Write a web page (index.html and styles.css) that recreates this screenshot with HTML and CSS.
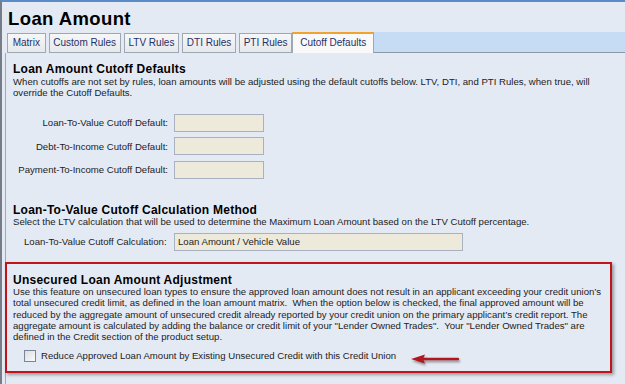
FILE: index.html
```html
<!DOCTYPE html>
<html>
<head>
<meta charset="utf-8">
<link rel="stylesheet" href="styles.css">
</head>
<body>
<div class="window">
  <h1 class="title">Loan Amount</h1>
  <div class="tabs">
    <div class="tab first">Matrix</div>
    <div class="tab">Custom Rules</div>
    <div class="tab">LTV Rules</div>
    <div class="tab">DTI Rules</div>
    <div class="tab">PTI Rules</div>
    <div class="tab active">Cutoff Defaults</div>
    <div class="tab-fill"></div>
  </div>
  <div class="panel">
    <section class="group g1">
      <h2>Loan Amount Cutoff Defaults</h2>
      <p class="desc">When cutoffs are not set by rules, loan amounts will be adjusted using the default cutoffs below. LTV, DTI, and PTI Rules, when true, will<br>override the Cutoff Defaults.</p>
      <div class="fields">
        <label>Loan-To-Value Cutoff Default:</label><div class="box"></div>
        <label>Debt-To-Income Cutoff Default:</label><div class="box"></div>
        <label>Payment-To-Income Cutoff Default:</label><div class="box"></div>
      </div>
    </section>
    <section class="group g2">
      <h2>Loan-To-Value Cutoff Calculation Method</h2>
      <p class="desc">Select the LTV calculation that will be used to determine the Maximum Loan Amount based on the LTV Cutoff percentage.</p>
      <div class="calc-row">
        <label>Loan-To-Value Cutoff Calculation:</label>
        <div class="box wide">Loan Amount / Vehicle Value</div>
      </div>
    </section>
    <section class="group highlight">
      <h2>Unsecured Loan Amount Adjustment</h2>
      <p class="desc">Use this feature on unsecured loan types to ensure the approved loan amount does not result in an applicant exceeding your credit union’s<br>total unsecured credit limit, as defined in the loan amount matrix.&nbsp; When the option below is checked, the final approved amount will be<br>reduced by the aggregate amount of unsecured credit already reported by your credit union on the primary applicant’s credit report. The<br>aggregate amount is calculated by adding the balance or credit limit of your "Lender Owned Trades".&nbsp; Your "Lender Owned Trades" are<br>defined in the Credit section of the product setup.</p>
      <div class="check-row">
        <span class="checkbox"></span>
        <span class="check-label">Reduce Approved Loan Amount by Existing Unsecured Credit with this Credit Union</span>
      </div>
      <svg class="arrow" width="52" height="16" viewBox="0 0 52 16">
        <line x1="12" y1="7" x2="48" y2="7" stroke="#b3161c" stroke-width="2.4" stroke-linecap="round"/>
        <polygon points="1,7 15,2.5 13,7 15,11.5" fill="#b3161c"/>
      </svg>
    </section>
  </div>
</div>
</body>
</html>
```
FILE: styles.css
```css
* { box-sizing: border-box; }
html, body { margin: 0; padding: 0; }
body {
  width: 625px;
  height: 384px;
  overflow: hidden;
  background: #e4eaf4;
  font-family: "Liberation Sans", Arial, sans-serif;
  color: #1c1c1c;
}
.window {
  height: 384px;
  border-top: 2px solid #5b8cc6;
  border-left: 2px solid #767d88;
  display: flex;
  flex-direction: column;
}
.title {
  margin: 0;
  padding: 6px 0 0 6px;
  font-size: 18.5px;
  letter-spacing: 0.4px;
  line-height: 22px;
  font-weight: bold;
  color: #000;
}
.tabs {
  display: flex;
  align-items: flex-end;
  height: 21px;
  margin-top: 2px;
  padding-left: 5px;
}
.tab {
  height: 20px;
  padding: 0 3.7px;
  margin-right: 3px;
  border: 1px solid #9ea7b4;
  background: linear-gradient(#f7f7f7, #e6e8ec);
  font-size: 10px;
  line-height: 18px;
  color: #1f306a;
  white-space: nowrap;
}
.tab.first { padding: 0 4.7px; }
.tab.active {
  height: 21px;
  margin-left: -3px;
  margin-right: 0;
  padding: 0 7px;
  border-top: 2px solid #f0a32e;
  border-bottom: none;
  background: #f9f9f9;
}
.tab-fill {
  flex: 1;
  height: 21px;
  background: #c6dcf5;
  border-bottom: 1px solid #8e97a4;
}
.panel {
  flex: 1;
  margin-left: 3px;
  border-left: 1px solid #a0a9b6;
  padding: 10px 0 0 7px;
}
.group h2 {
  margin: 0;
  font-size: 12px;
  letter-spacing: 0.25px;
  line-height: 12px;
  font-weight: bold;
  color: #000;
}
.desc {
  margin: 0;
  font-size: 9.6px;
  line-height: 11.3px;
  white-space: nowrap;
}
.g1 .desc { margin-top: 1px; }
.fields {
  margin-top: 15.4px;
  display: grid;
  grid-template-columns: 155px 90px;
  column-gap: 6px;
  row-gap: 5.5px;
  align-items: center;
}
.fields label {
  text-align: right;
  font-size: 9.6px;
}
.box {
  height: 18px;
  background: #eeeadb;
  border: 1px solid #a7b1bf;
  font-size: 9.6px;
  line-height: 16px;
  padding-left: 3px;
  color: #1c1c1c;
}
.g2 { margin-top: 25px; }
.calc-row {
  margin-top: 5.7px;
  display: flex;
  align-items: center;
  padding-left: 11px;
}
.calc-row label {
  width: 150px;
  font-size: 9.6px;
}
.box.wide { width: 289px; }
.highlight {
  position: relative;
  margin-top: 11px;
  margin-left: -8px;
  width: 607px;
  border: 2px solid #c0141b;
  padding: 10px 0 9px 6px;
  box-shadow: 2px 2px 3px rgba(60, 60, 60, 0.45);
}
.check-row {
  margin-top: 7.5px;
  display: flex;
  align-items: center;
  height: 12px;
  padding-left: 11px;
}
.checkbox {
  width: 12px;
  height: 12px;
  border: 1px solid #7a8597;
  background: linear-gradient(135deg, #dadde2, #fbfbfb);
}
.check-label {
  margin-left: 5px;
  font-size: 9.6px;
  line-height: 12px;
  white-space: nowrap;
}
.arrow {
  position: absolute;
  left: 403px;
  top: 88px;
  filter: drop-shadow(1px 2px 1px rgba(0, 0, 0, 0.4));
}
```
